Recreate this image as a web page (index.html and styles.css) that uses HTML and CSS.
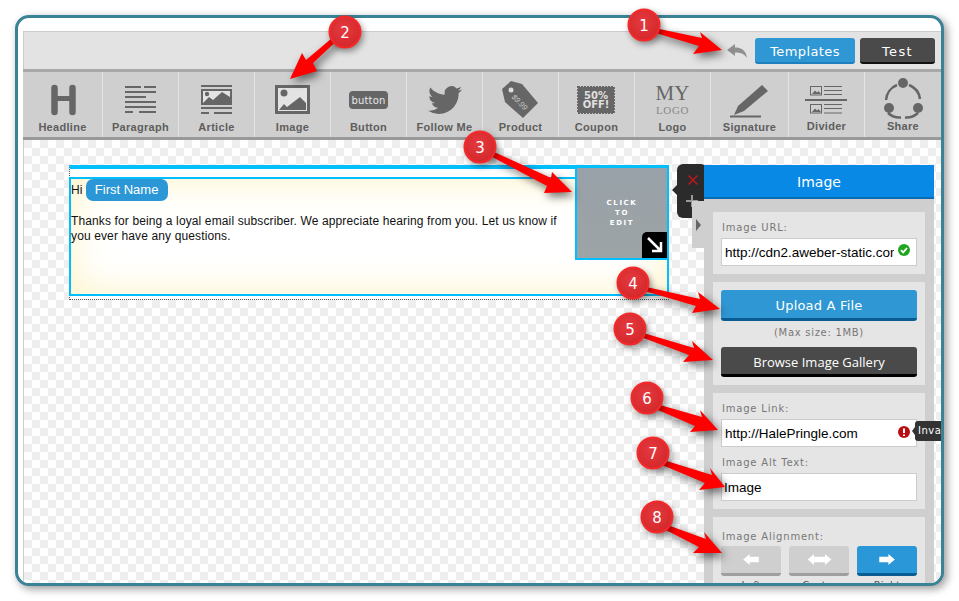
FILE: index.html
```html
<!DOCTYPE html>
<html lang="en">
<head>
<meta charset="utf-8">
<title>Email editor</title>
<link rel="stylesheet" href="styles.css">
</head>
<body>
<div class="frame">
  <header class="topbar">
    <svg class="undo" viewBox="0 0 20 14" width="20" height="14"><path d="M0 6 L8 0 V3.500 C14 3.500 19 6 20 14 C17 9.500 13 8.500 8 8.500 V12 Z"/></svg>
    <button class="top-btn top-btn-blue">Templates</button>
    <button class="top-btn top-btn-dark">Test</button>
  </header>
  <nav class="toolbar">
    <div class="tool tool-first">
      <svg class="ico" viewBox="0 0 79 50"><path d="M31.500 16V40M49.500 16V40" fill="none" stroke="#666" stroke-width="6.500" stroke-linecap="round"/><path d="M31.500 26.500H49.500" stroke="#666" stroke-width="5"/></svg>
      <span class="tool-label">Headline</span>
    </div>
    <div class="tool">
      <svg class="ico" viewBox="1 0 76 50"><path d="M23 15H39M42 15H54M23 20H54M23 25H44M23 30H54M23 35H54M23 40H31M37 40H54" stroke="#666" stroke-width="2"/></svg>
      <span class="tool-label">Paragraph</span>
    </div>
    <div class="tool">
      <svg class="ico" viewBox="1 0 76 50"><path d="M23 14H54M23 36H54M23 41H31M36 41H54" stroke="#666" stroke-width="2"/><rect x="24" y="18" width="29" height="14" fill="#e3e3e3" stroke="#666" stroke-width="2"/><circle cx="29" cy="22" r="2.200" fill="#666"/><path d="M25 31L31 25L35 28L44 20L52 25V31Z" fill="#666"/></svg>
      <span class="tool-label">Article</span>
    </div>
    <div class="tool">
      <svg class="ico" viewBox="1 0 76 50"><rect x="22.500" y="14.500" width="32" height="26" fill="#e3e3e3" stroke="#666" stroke-width="3"/><circle cx="30" cy="21" r="3.500" fill="#666"/><path d="M25 38L30 32L33 35L46 25L52 31V38Z" fill="#666"/></svg>
      <span class="tool-label">Image</span>
    </div>
    <div class="tool">
      <svg class="ico" viewBox="1 0 76 50"><rect x="19" y="19" width="39" height="18" rx="4" fill="#666"/><text x="38.500" y="32" class="ico-btn-text">button</text></svg>
      <span class="tool-label">Button</span>
    </div>
    <div class="tool">
      <svg class="ico" viewBox="1 0 76 50"><path transform="translate(22 11) scale(1.420)" fill="#666" d="M23.953 4.57a10 10 0 01-2.825.775 4.958 4.958 0 002.163-2.723c-.951.555-2.005.959-3.127 1.184a4.92 4.92 0 00-8.384 4.482C7.69 8.095 4.067 6.13 1.64 3.162a4.822 4.822 0 00-.666 2.475c0 1.71.87 3.213 2.188 4.096a4.904 4.904 0 01-2.228-.616v.06a4.923 4.923 0 003.946 4.827 4.996 4.996 0 01-2.212.085 4.936 4.936 0 004.604 3.417 9.867 9.867 0 01-6.102 2.105c-.39 0-.779-.023-1.17-.067a13.995 13.995 0 007.557 2.209c9.053 0 13.998-7.496 13.998-13.985 0-.21 0-.42-.015-.63A9.935 9.935 0 0024 4.59z"/></svg>
      <span class="tool-label">Follow Me</span>
    </div>
    <div class="tool">
      <svg class="ico" viewBox="1 0 76 50"><path d="M20 17L29 9L40 12L56 31L41 46L23 30Z" fill="#666"/><circle cx="29" cy="18" r="2.500" fill="#ddd"/><text x="38" y="33" transform="rotate(45 38 30)" class="ico-tag-text">$9.99</text></svg>
      <span class="tool-label">Product</span>
    </div>
    <div class="tool">
      <svg class="ico" viewBox="1 0 76 50"><rect x="20" y="15" width="36" height="26" fill="#666" stroke="#666" stroke-width="2" stroke-dasharray="2 1"/><text x="38" y="27" class="ico-coupon-text">50%</text><text x="38" y="36" class="ico-coupon-text">OFF!</text></svg>
      <span class="tool-label">Coupon</span>
    </div>
    <div class="tool">
      <svg class="ico" viewBox="1 0 76 50"><text x="38.500" y="28" class="ico-my">MY</text><text x="38.500" y="42" class="ico-logo">LOGO</text></svg>
      <span class="tool-label">Logo</span>
    </div>
    <div class="tool tool-wide">
      <svg class="ico" viewBox="1 0 78 50"><path d="M20 44.500H51" stroke="#666" stroke-width="2"/><path d="M52 13L58 19L34 39L24 43L28 34Z" fill="#666"/></svg>
      <span class="tool-label">Signature</span>
    </div>
    <div class="tool">
      <svg class="ico" viewBox="1 0 76 50"><rect x="22.500" y="14.500" width="11" height="8.500" fill="none" stroke="#666"/><rect x="22.500" y="32.500" width="11" height="8.500" fill="none" stroke="#666"/><path d="M24 22L27 18.500L29 20.500L30.500 19L33 22ZM24 40L27 36.500L29 38.500L30.500 37L33 40Z" fill="#666"/><path d="M36 14.500H54M36 18.500H54M36 22.500H54M36 32.500H54M36 36.500H54M36 41H54" stroke="#666"/><path d="M17 28H59" stroke="#666" stroke-width="2"/></svg>
      <span class="tool-label tool-label-up">Divider</span>
    </div>
    <div class="tool">
      <svg class="ico" viewBox="1 0 76 50"><path d="M45 13A17.500 17.500 0 0 1 56 27M54 41A17.500 17.500 0 0 1 41 45.500M37 45.500A17.500 17.500 0 0 1 24 41M22 28A17.500 17.500 0 0 1 33 13" fill="none" stroke="#666" stroke-width="2.500"/><circle cx="39" cy="11" r="5" fill="#666"/><circle cx="25" cy="36" r="5" fill="#666"/><circle cx="54" cy="36" r="5" fill="#666"/></svg>
      <span class="tool-label tool-label-up">Share</span>
    </div>
  </nav>
  <main class="canvas">
    <section class="block">
      <div class="text-box">
        <p class="greet">Hi <span class="pill">First Name</span></p>
        <p class="copy">Thanks for being a loyal email subscriber. We appreciate hearing from you. Let us know if you ever have any questions.</p>
      </div>
      <div class="pic">
        <div class="pic-label">CLICK<br>TO<br>EDIT</div>
        <div class="pic-corner"><svg viewBox="0 0 16 16" width="16" height="16"><path d="M1 1L13 13M14 5V14H5" fill="none" stroke="#fff" stroke-width="2.500"/></svg></div>
      </div>
    </section>
    <aside class="panel">
      <div class="handle">
        <svg class="handle-x" viewBox="0 0 10 10" width="10" height="10"><path d="M0.500 0.500L9.500 9.500M9.500 0.500L0.500 9.500" stroke="#c8161c" stroke-width="1.300"/></svg>
        <svg class="handle-plus" viewBox="0 0 12 12" width="12" height="12"><path d="M0 6H12M6 0V12" stroke="#999" stroke-width="2"/></svg>
      </div>
      <div class="side-tab"></div>
      <h2 class="panel-title">Image</h2>
      <div class="panel-body">
        <div class="section">
          <div class="label">Image URL:</div>
          <div class="field">
            <span class="field-text">http://cdn2.aweber-static.com</span>
            <svg class="field-icon" viewBox="0 0 12 12" width="12" height="12"><circle cx="6" cy="6" r="6" fill="#1fa51f"/><path d="M3 6.200L5.200 8.400L9 4" fill="none" stroke="#fff" stroke-width="1.800"/></svg>
          </div>
        </div>
        <div class="section section-upload">
          <button class="wide-btn wide-btn-blue">Upload A File</button>
          <div class="note">(Max size: 1MB)</div>
          <button class="wide-btn wide-btn-dark">Browse Image Gallery</button>
        </div>
        <div class="section">
          <div class="label">Image Link:</div>
          <div class="field">
            <span class="field-text">http://HalePringle.com</span>
            <svg class="field-icon field-icon-low" viewBox="0 0 12 12" width="12" height="12"><circle cx="6" cy="6" r="6" fill="#b80f14"/><path d="M6 2.500V7M6 8.500V10" stroke="#fff" stroke-width="2"/></svg>
            <div class="tip">Invalid</div>
          </div>
          <div class="label label-next">Image Alt Text:</div>
          <div class="field"><span class="field-text field-text-tight">Image</span></div>
        </div>
        <div class="section section-align">
          <div class="label label-align">Image Alignment:</div>
          <div class="align-row">
            <div class="align-col">
              <button class="align-btn"><svg viewBox="0 0 18 12" width="17" height="11"><path d="M0 6L7 0V3H17V9H7V12Z" fill="#fff"/></svg></button>
              <span class="align-label">Left</span>
            </div>
            <div class="align-col">
              <button class="align-btn"><svg viewBox="0 0 26 12" width="25" height="11"><path d="M0 6L7 0V3H19V0L26 6L19 12V9H7V12Z" fill="#fff"/></svg></button>
              <span class="align-label">Center</span>
            </div>
            <div class="align-col">
              <button class="align-btn align-btn-on"><svg viewBox="0 0 18 12" width="17" height="11"><path d="M17 6L10 0V3H0V9H10V12Z" fill="#fff"/></svg></button>
              <span class="align-label">Right</span>
            </div>
          </div>
        </div>
      </div>
    </aside>
  </main>
</div>
<svg class="marks" viewBox="0 0 959 601" width="959" height="601">
  <defs>
    <radialGradient id="ball" cx="45%" cy="40%" r="65%"><stop offset="0" stop-color="#e43a3e"/><stop offset="1" stop-color="#d3262b"/></radialGradient>
  </defs>
  <g class="arrow">
    <polygon points="650,27 702,38 700,32 722,50 693,54 699,46 649,31"/>
    <polygon points="342,36 313,63 317,71 290,79 302,53 306,60 338,33"/>
    <polygon points="483,147 551,178 552,172 572,192 544,193 547,186 481,151"/>
    <polygon points="642,286 700,299 698,292 720,309 692,313 696,306 641,290"/>
    <polygon points="640,332 694,348 692,341 713,360 683,362 689,355 638,336"/>
    <polygon points="653,403 702,417 700,410 718,430 690,432 695,426 651,407"/>
    <polygon points="657,458 712,475 710,468 725,487 699,490 705,483 655,462"/>
    <polygon points="662,523 706,539 704,532 722,553 693,553 699,547 660,527"/>
  </g>
  <g class="ball">
    <circle cx="644" cy="25" r="15.500"/><circle cx="345" cy="32" r="15.500"/><circle cx="480" cy="147" r="15.500"/><circle cx="633" cy="283" r="15.500"/>
    <circle cx="630" cy="329" r="15.500"/><circle cx="647" cy="398" r="15.500"/><circle cx="653" cy="453" r="15.500"/><circle cx="657" cy="517" r="15.500"/>
  </g>
  <g class="ball-num">
    <text x="644" y="31">1</text><text x="345" y="38">2</text><text x="480" y="153">3</text><text x="633" y="289">4</text>
    <text x="630" y="335">5</text><text x="647" y="404">6</text><text x="653" y="459">7</text><text x="657" y="523">8</text>
  </g>
</svg>
</body>
</html>
```
FILE: styles.css
```css
* { box-sizing: border-box; }
html, body { margin: 0; padding: 0; background: #fff; }
body { width: 959px; height: 601px; overflow: hidden; position: relative; font-family: "DejaVu Sans", sans-serif; }

.frame {
  margin: 15px 0 0 15px;
  width: 929px;
  height: 571px;
  border: 3px solid #3a8296;
  border-radius: 14px;
  background: #fff;
  box-shadow: 3px 3px 8px rgba(0,0,0,.4);
  padding: 13px 0 0 5px;
  overflow: hidden;
  display: flex;
  flex-direction: column;
}

.topbar {
  height: 38px;
  flex: none;
  background: #e3e3e3;
  border-top: 1px solid #ccc;
  border-left: 1px solid #ccc;
  display: flex;
  align-items: center;
  justify-content: flex-end;
  padding: 1px 6px 0 0;
}
.undo { fill: #8f8f8f; margin-right: 8px; }
.top-btn {
  height: 26px;
  border: 0;
  border-radius: 3px;
  color: #fff;
  font: 13px "DejaVu Sans", sans-serif;
  letter-spacing: .4px;
  padding: 2px 0 0;
}
.top-btn-blue { width: 100px; background: #2f97d4; border-bottom: 2px solid #1d7fbb; }
.top-btn-dark { width: 75px; margin-left: 5px; background: #4a4a4a; border-bottom: 2px solid #111; letter-spacing: 1.400px; }

.toolbar {
  flex: none;
  height: 71px;
  display: flex;
  background: #cfcfcf;
  border-top: 3px solid #a8a8a8;
  border-bottom: 3px solid #999;
}
.tool {
  width: 76px;
  flex: none;
  height: 65px;
  border-right: 1px solid #e4e4e4;
  display: flex;
  flex-direction: column;
  align-items: center;
}
.tool:last-child { border-right: 0; }
.tool-first { width: 80px; }
.tool-wide { width: 78px; }
.ico { width: 76px; height: 50px; flex: none; align-self: flex-start; overflow: visible; }
.tool-first .ico { width: 79px; }
.tool-wide .ico { width: 78px; }
.tool-label {
  font: bold 11px/14px "Liberation Sans", sans-serif;
  color: #5e5e5e;
  letter-spacing: .3px;
  margin-top: -2px;
}
.tool-label-up { margin-top: -3px; }
.ico-btn-text { font: 10px "DejaVu Sans", sans-serif; fill: #e8e8e8; text-anchor: middle; letter-spacing: .2px; }
.ico-tag-text { font: italic 7.500px "Liberation Sans", sans-serif; fill: #ccc; text-anchor: middle; }
.ico-coupon-text { font: bold 10px "DejaVu Sans", sans-serif; fill: #e0e0e0; text-anchor: middle; }
.ico-my { font: 21px "Liberation Serif", serif; fill: #666; text-anchor: middle; }
.ico-logo { font: 11px "Liberation Serif", serif; fill: #888; text-anchor: middle; letter-spacing: .6px; }

.canvas {
  flex: 1;
  min-height: 0;
  display: flex;
  align-items: flex-start;
  overflow: hidden;
  padding: 25px 0 0 45px;
  border-left: 1px solid #ccc;
  background: repeating-conic-gradient(#fff 0 25%, #eee 0 50%) 0 0 / 16px 16px;
}

.block {
  position: relative;
  flex: none;
  width: 600px;
  height: 135px;
  padding-top: 8px;
  border-top: 4px solid #00bfff;
  border-bottom: 1px dotted #555;
  border-left: 1px dotted #555;
  border-right: 1px dotted #555;
  background: #fff;
  background-clip: padding-box;
  font-family: "Liberation Sans", sans-serif;
  color: #111;
}
.text-box {
  margin-left: -1px;
  margin-right: -1px;
  height: 119px;
  border: 2px solid #00bfff;
  background: #fff;
  box-shadow: inset 0 0 40px #fff3c4;
  font-size: 12px;
  line-height: 15px;
  letter-spacing: .125px;
}
.greet { margin: 0; height: 22px; display: flex; align-items: center; gap: 3px; }
.pill {
  width: 82px;
  height: 22px;
  border-radius: 7px;
  background: #2b97d6;
  color: #fff;
  font-size: 13px;
  line-height: 22px;
  text-align: center;
  letter-spacing: 0;
}
.copy { margin: 13px 0 0; width: 495px; }
.pic {
  position: absolute;
  top: -3px;
  right: -1px;
  width: 94px;
  height: 94px;
  border: 2px solid #00bfff;
  background: linear-gradient(#98a1a8, #9da4a6);
  color: #fff;
}
.pic-label {
  font: bold 7px/10px "DejaVu Sans", sans-serif;
  letter-spacing: 1.600px;
  text-align: center;
  padding-top: 30px;
}
.pic-corner {
  position: absolute;
  right: 0;
  bottom: 0;
  width: 25px;
  height: 26px;
  background: #000;
  border-top-left-radius: 5px;
  display: flex;
  align-items: center;
  justify-content: center;
}

.panel {
  position: relative;
  flex: none;
  width: 230px;
  margin-left: 35px;
}
.handle {
  position: absolute;
  left: -27px;
  top: -1px;
  width: 30px;
  height: 54px;
  background: #2b2b2b;
  border-radius: 6px;
}
.handle::before {
  content: "";
  position: absolute;
  left: -5px;
  top: 21px;
  border: 5px solid transparent;
  border-left: 0;
  border-right-color: #2b2b2b;
}
.handle-x { position: absolute; left: 11px; top: 11px; }
.handle-plus { position: absolute; left: 9px; top: 31px; }
.side-tab {
  position: absolute;
  left: -12px;
  top: 36px;
  width: 12px;
  height: 47px;
  background: #cfcfcf;
}
.side-tab::after {
  content: "";
  position: absolute;
  left: 4px;
  top: 18px;
  border: 6.500px solid transparent;
  border-right: 0;
  border-left: 5px solid #666;
}
.panel-title {
  position: relative;
  margin: 0;
  height: 34px;
  background: #0789e5;
  border-bottom: 2px solid #0a6cb3;
  color: #fff;
  font: 14px/34px "DejaVu Sans", sans-serif;
  text-align: center;
}
.panel-body {
  position: relative;
  background: #cfcfcf;
  padding: 13px 9px;
  display: flex;
  flex-direction: column;
  gap: 8px;
}
.section { background: #e5e5e5; padding: 9px 8px 8px; }
.section-upload { padding-top: 8px; }
.section-align { padding-top: 13px; }
.label {
  font: 10px/14px "DejaVu Sans", sans-serif;
  color: #777;
  letter-spacing: .8px;
  padding-left: 1px;
  margin-bottom: 3px;
}
.label-next { margin-top: 9px; }
.label-align { margin-bottom: 2px; }
.field {
  position: relative;
  height: 28px;
  background: #fff;
  border: 1px solid #ccc;
  padding-left: 3px;
  font: 13.500px/27px "Liberation Sans", sans-serif;
  color: #000;
}
.field-text { display: block; width: 169px; overflow: hidden; white-space: nowrap; }
.field-text-tight { margin-left: -1px; }
.field-icon { position: absolute; left: 176px; top: 5px; }
.field-icon-low { top: 6px; }
.tip {
  position: absolute;
  left: 193px;
  top: 1px;
  height: 20px;
  width: 40px;
  padding-left: 3px;
  background: #333;
  border-radius: 3px;
  color: #fff;
  font: 10px/20px "DejaVu Sans", sans-serif;
  letter-spacing: .5px;
  white-space: nowrap;
}
.tip::before {
  content: "";
  position: absolute;
  left: -3px;
  top: 6px;
  border: 4px solid transparent;
  border-left: 0;
  border-right: 3px solid #333;
}
.wide-btn {
  display: block;
  width: 100%;
  border: 0;
  border-radius: 3px;
  color: #fff;
  padding: 2px 0 0;
}
.wide-btn-blue { height: 31px; background: #2f97d4; border-bottom: 3px solid #0a5d92; font: 13px "DejaVu Sans", sans-serif; letter-spacing: .2px; }
.wide-btn-dark { height: 30px; background: #4a4a4a; border-bottom: 3px solid #000; font: 13px "Open Sans", sans-serif; }
.note { height: 26px; font: 10px/24px "DejaVu Sans", sans-serif; color: #777; text-align: center; letter-spacing: .7px; }
.align-row { display: flex; gap: 8px; }
.align-col { width: 60px; display: flex; flex-direction: column; align-items: center; }
.align-btn {
  width: 60px;
  height: 30px;
  border: 0;
  border-bottom: 3px solid #9f9f9f;
  border-radius: 3px;
  background: #cfcfcf;
  padding: 0;
  display: flex;
  align-items: center;
  justify-content: center;
}
.align-btn-on { background: #2a97d8; border-bottom-color: #0a5d92; }
.align-label { font: 10px/14px "DejaVu Sans", sans-serif; color: #555; margin-top: 3px; }

.marks { position: absolute; left: 0; top: 0; pointer-events: none; }
.arrow polygon { fill: #f00; filter: drop-shadow(3px 4px 4px rgba(0,0,0,.55)); }
.ball circle { fill: url(#ball); stroke: #f42a2a; stroke-width: 2; filter: drop-shadow(2px 3px 3px rgba(0,0,0,.4)); }
.ball-num text { font: 15px "DejaVu Sans", sans-serif; fill: #fff; text-anchor: middle; }
```
